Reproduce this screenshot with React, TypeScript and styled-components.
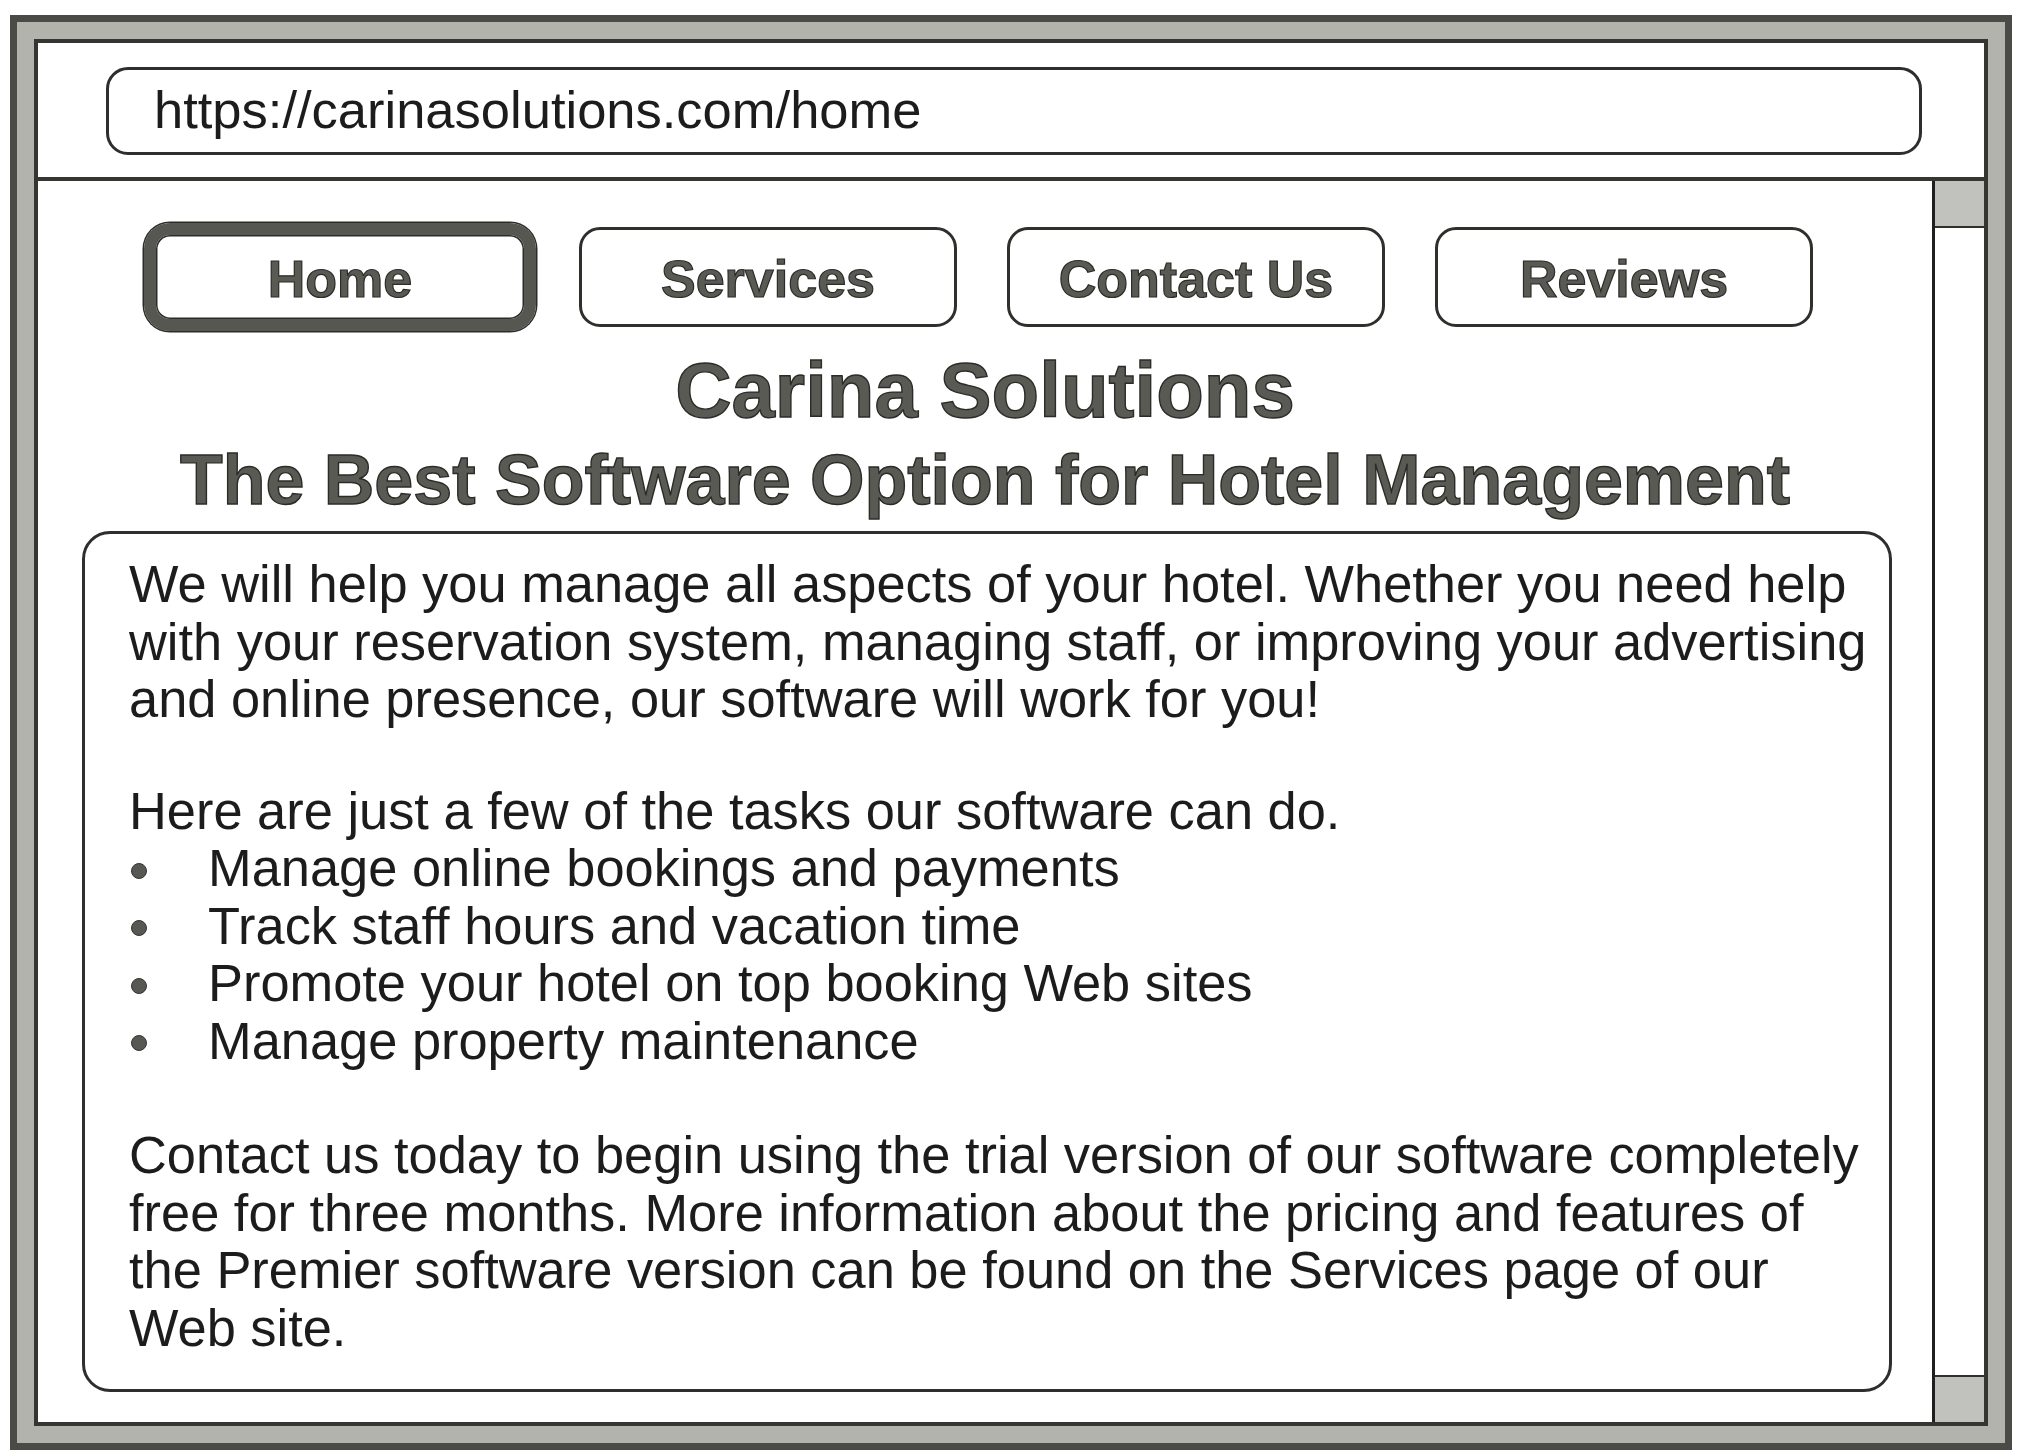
import React from 'react';
import styled, { createGlobalStyle } from 'styled-components';

const navItems = ['Home', 'Services', 'Contact Us', 'Reviews'];

const tasks = [
  'Manage online bookings and payments',
  'Track staff hours and vacation time',
  'Promote your hotel on top booking Web sites',
  'Manage property maintenance',
];

const GlobalStyle = createGlobalStyle`
  html, body {
    margin: 0;
    padding: 0;
    background: #ffffff;
  }
  body {
    font-family: "Liberation Sans", Arial, Helvetica, sans-serif;
    color: #1c1c1c;
  }
`;

const App = () => {
  return (
    <>
      <GlobalStyle />
      <Frame>
        <BrowserWindow>
          <AddressArea>
            <AddressBar>https://carinasolutions.com/home</AddressBar>
          </AddressArea>
          <Viewport>
            <Page>
              <NavRow>
                {navItems.map((item, index) => (
                  <NavButton key={item} $active={index === 0}>
                    {item}
                  </NavButton>
                ))}
              </NavRow>
              <Title>Carina Solutions</Title>
              <Subtitle>The Best Software Option for Hotel Management</Subtitle>
              <ContentBox>
                <Paragraph $gap={54}>
                  We will help you manage all aspects of your hotel. Whether you need help
                  <br />
                  with your reservation system, managing staff, or improving your advertising
                  <br />
                  and online presence, our software will work for you!
                </Paragraph>
                <Paragraph $gap={0}>Here are just a few of the tasks our software can do.</Paragraph>
                <TaskList>
                  {tasks.map((task) => (
                    <TaskItem key={task}>
                      <Bullet />
                      <span>{task}</span>
                    </TaskItem>
                  ))}
                </TaskList>
                <Paragraph $gap={0}>
                  Contact us today to begin using the trial version of our software completely
                  <br />
                  free for three months. More information about the pricing and features of
                  <br />
                  the Premier software version can be found on the Services page of our
                  <br />
                  Web site.
                </Paragraph>
              </ContentBox>
            </Page>
            <Scrollbar>
              <ScrollCap $position="top" />
              <ScrollTrack />
              <ScrollCap $position="bottom" />
            </Scrollbar>
          </Viewport>
        </BrowserWindow>
      </Frame>
    </>
  );
};

export default App;

const Frame = styled.div`
  box-sizing: border-box;
  margin: 15px 0 0 10px;
  width: 2002px;
  height: 1435px;
  border: 7px solid #4a4a46;
  background: #b3b3ae;
  padding: 17px;
  display: flex;
`;

const BrowserWindow = styled.div`
  flex: 1;
  display: flex;
  flex-direction: column;
  background: #ffffff;
  border: 4px solid #353532;
`;

const AddressArea = styled.div`
  box-sizing: border-box;
  height: 138px;
  padding: 24px 62px 0 68px;
  border-bottom: 4px solid #363633;
`;

const AddressBar = styled.div`
  box-sizing: border-box;
  height: 88px;
  border: 3px solid #2e2e2c;
  border-radius: 22px;
  padding: 0 0 3px 45px;
  display: flex;
  align-items: center;
  font-size: 52.5px;
  color: #1c1c1c;
`;

const Viewport = styled.div`
  flex: 1;
  display: flex;
  min-height: 0;
`;

const Page = styled.div`
  flex: 1;
  display: flex;
  flex-direction: column;
  align-items: center;
  padding-top: 42px;
`;

const NavRow = styled.div`
  display: flex;
  align-items: center;
  gap: 50px;
  align-self: flex-start;
  margin-left: 113px;
`;

const NavButton = styled.div<{ $active: boolean }>`
  box-sizing: border-box;
  display: flex;
  align-items: center;
  justify-content: center;
  width: ${(p) => (p.$active ? '392px' : '378px')};
  height: ${(p) => (p.$active ? '108px' : '100px')};
  margin: ${(p) => (p.$active ? '0 -7px' : '0')};
  border: ${(p) => (p.$active ? '12px solid #575751' : '3px solid #2f2f2c')};
  border-radius: ${(p) => (p.$active ? '26px' : '21px')};
  box-shadow: ${(p) =>
    p.$active ? '0 0 0 1.5px #2c2c29, inset 0 0 0 1.5px #2c2c29' : 'none'};
  font-size: 52px;
  font-weight: 700;
  color: #5a5a55;
  -webkit-text-stroke: 1.2px #2b2b28;
  padding-top: 4px;
`;

const Title = styled.h1`
  margin: 15px 0 0;
  font-size: 78px;
  line-height: 88px;
  font-weight: 700;
  color: #5a5a55;
  -webkit-text-stroke: 1.4px #2b2b28;
`;

const Subtitle = styled.h2`
  margin: 6px 0 0;
  font-size: 70px;
  line-height: 80px;
  font-weight: 700;
  color: #5a5a55;
  -webkit-text-stroke: 1.4px #2b2b28;
`;

const ContentBox = styled.div`
  box-sizing: border-box;
  align-self: stretch;
  margin: 11px 40px 0 44px;
  height: 861px;
  border: 3px solid #2e2e2c;
  border-radius: 28px;
  padding: 22px 0 0 44px;
  font-size: 52.4px;
  line-height: 57.5px;
  color: #1c1c1c;
  white-space: nowrap;
`;

const Paragraph = styled.p<{ $gap: number }>`
  margin: 0 0 ${(p) => p.$gap}px;
`;

const TaskList = styled.ul`
  list-style: none;
  margin: 0 0 57px;
  padding: 0;
`;

const TaskItem = styled.li`
  display: flex;
  align-items: center;
`;

const Bullet = styled.span`
  width: 14px;
  height: 14px;
  border-radius: 50%;
  background: #575753;
  border: 1px solid #33332f;
  margin: 4px 61px 0 2px;
  flex-shrink: 0;
`;

const Scrollbar = styled.div`
  width: 49px;
  display: flex;
  flex-direction: column;
  border-left: 3px solid #1f1f1d;
`;

const ScrollCap = styled.div<{ $position: 'top' | 'bottom' }>`
  height: 45px;
  background: #c1c1bd;
  ${(p) =>
    p.$position === 'top'
      ? 'border-bottom: 2px solid #2f2f2c;'
      : 'border-top: 2px solid #2f2f2c;'}
`;

const ScrollTrack = styled.div`
  flex: 1;
  background: #ffffff;
`;
